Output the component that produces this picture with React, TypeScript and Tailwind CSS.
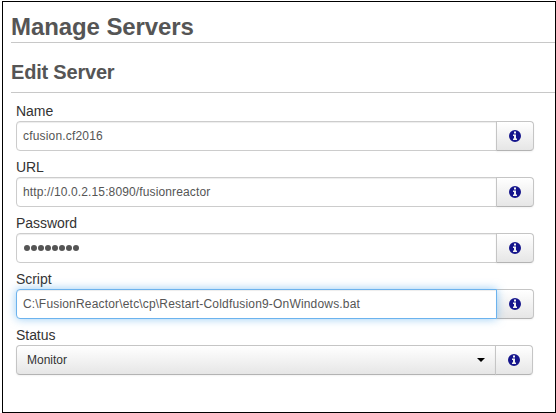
import React from "react";

function InfoIcon() {
  return (
    <svg width="12" height="12" viewBox="0 0 12 12" aria-hidden="true">
      <path
        fill="#15158c"
        fillRule="evenodd"
        d="M6 0a6 6 0 1 1 0 12A6 6 0 0 1 6 0ZM5 1.5v2h2v-2H5ZM4 4.500v1.500h1v2.500H4V10h4V8.500H7v-4H4Z"
      />
    </svg>
  );
}

const surface =
  "bg-linear-to-b from-white to-[#e6e6e6] border border-[#c5c5c5] border-b-[#b3b3b3] shadow-[0_1px_2px_rgba(0,0,0,0.05)]";

function InfoButton() {
  return (
    <button
      type="button"
      className={`-ml-px flex h-[30px] w-[38px] shrink-0 items-center justify-center rounded-r ${surface}`}
    >
      <InfoIcon />
    </button>
  );
}

interface FieldProps {
  label: string;
  focused?: boolean;
  valueClass?: string;
  children: React.ReactNode;
}

function Field({ label, focused, valueClass = "", children }: FieldProps) {
  const frame = focused
    ? "relative border-[#6cb3ee] shadow-[inset_0_1px_1px_rgba(0,0,0,0.075),0_0_10px_rgba(82,168,236,0.6)]"
    : "border-[#cccccc] shadow-[inset_0_1px_1px_rgba(0,0,0,0.075)]";
  return (
    <div className="h-14">
      <div className="h-5 text-sm leading-5 tracking-[-0.05px] text-[#333333]">{label}</div>
      <div className="flex">
        <div
          className={`flex h-[30px] w-[481px] items-center rounded-l border bg-white px-1.5 text-xs whitespace-nowrap text-[#555555] ${frame}`}
        >
          <span className={valueClass}>{children}</span>
        </div>
        <InfoButton />
      </div>
    </div>
  );
}

export default function App() {
  return (
    <div className="h-[413px] w-[556px] overflow-hidden bg-white pt-px pl-0.5 font-['Liberation_Sans',Arial,sans-serif]">
      <main className="h-[412px] w-[554px] border border-black pl-2">
        <h1 className="h-[41px] border-b border-[#c8c8c8] pt-[9px] text-2xl leading-8 font-bold tracking-[-0.09px] text-[#555555]">
          Manage Servers
        </h1>
        <h2 className="mb-2 h-[50px] border-b border-[#c8c8c8] pt-[15px] text-xl leading-7 font-bold tracking-[-0.2px] text-[#555555]">
          Edit Server
        </h2>
        <form className="pl-[5px]">
          <Field label="Name" valueClass="tracking-[0.18px]">
            cfusion.cf2016
          </Field>
          <Field label="URL" valueClass="tracking-[0.13px]">
            http://10.0.2.15:8090/fusionreactor
          </Field>
          <Field label="Password">
            <span className="flex gap-px pl-px">
              {Array.from({ length: 8 }, (_, i) => (
                <i key={i} className="size-1.5 rounded-full bg-[#555555]" />
              ))}
            </span>
          </Field>
          <Field label="Script" focused valueClass="tracking-[0.18px]">
            {"C:\\FusionReactor\\etc\\cp\\Restart-Coldfusion9-OnWindows.bat"}
          </Field>
          <div>
            <div className="h-5 text-sm leading-5 tracking-[-0.05px] text-[#333333]">Status</div>
            <div className="flex">
              <button
                type="button"
                className={`flex h-[30px] w-[480px] items-center justify-between rounded-l pr-2.5 pl-2.5 text-xs text-[#333333] ${surface}`}
              >
                <span>Monitor</span>
                <svg width="8" height="4" viewBox="0 0 8 4" aria-hidden="true">
                  <path d="M0 0h8L4 4Z" />
                </svg>
              </button>
              <InfoButton />
            </div>
          </div>
        </form>
      </main>
    </div>
  );
}
